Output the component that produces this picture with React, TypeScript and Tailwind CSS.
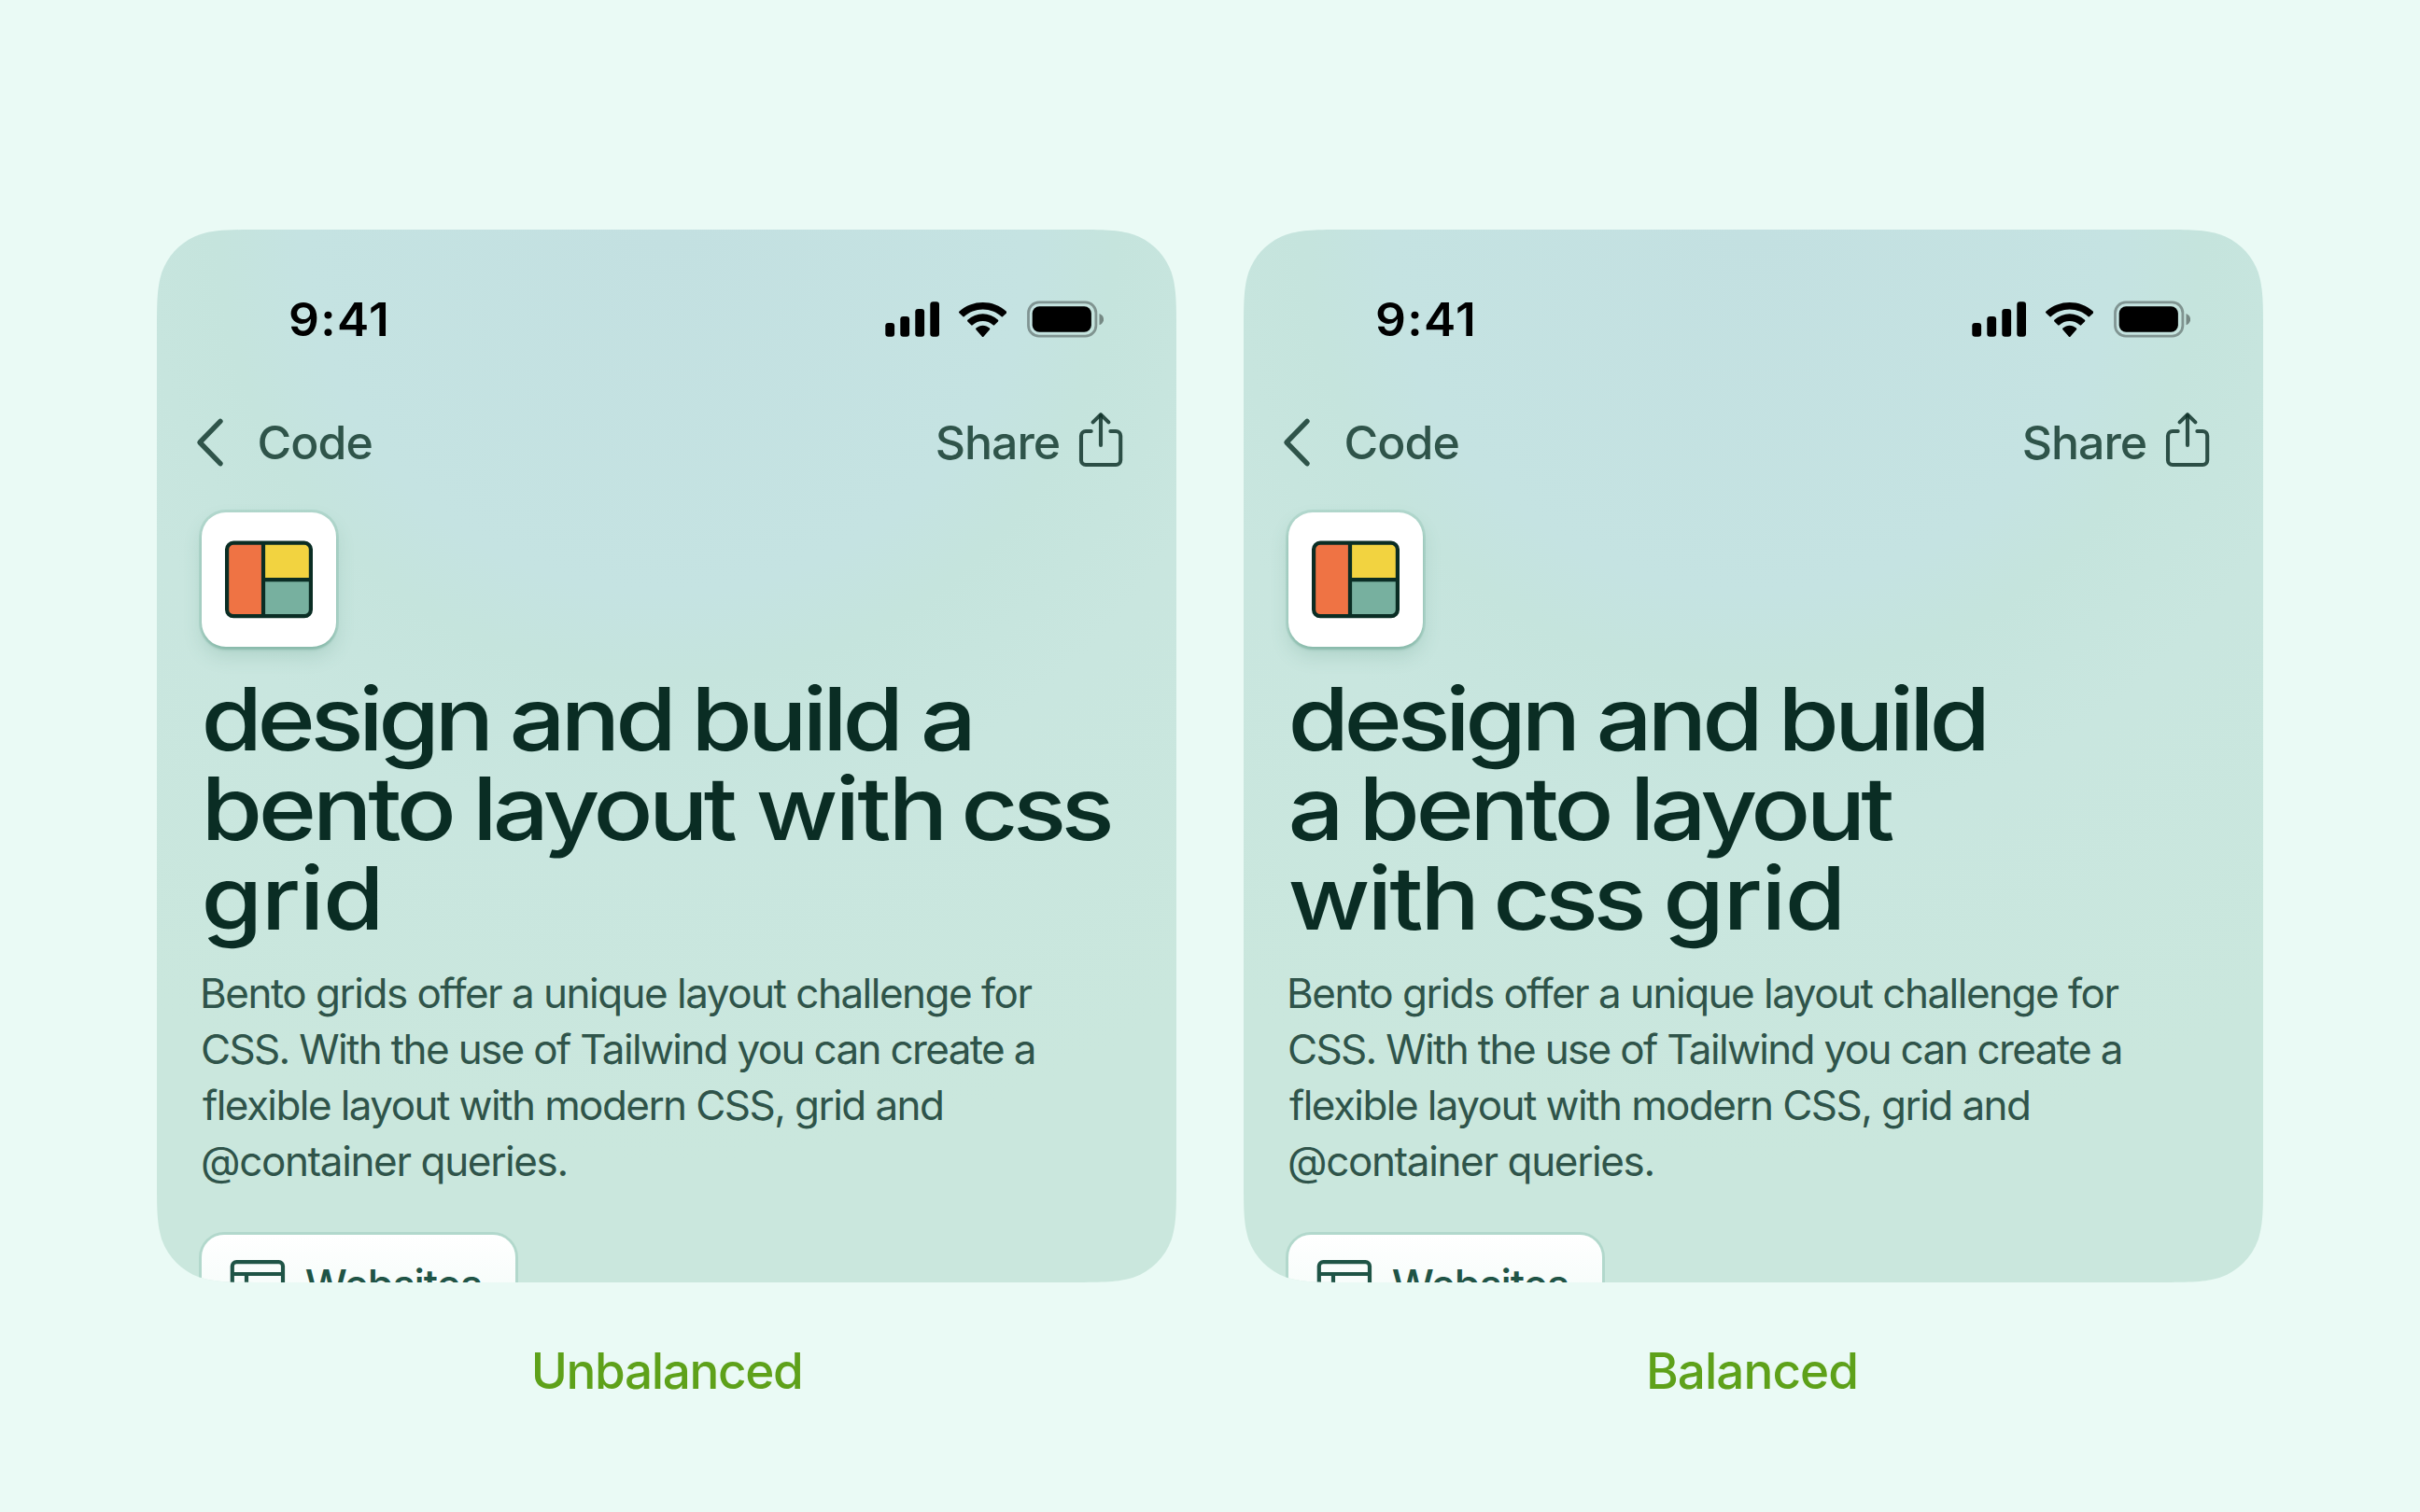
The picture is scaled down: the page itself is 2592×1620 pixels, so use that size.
import type { ReactNode } from "react";

type WordStyle = { tracking: string; gap: string };

// Optical kerning for the display face: letter fit and the space before each word.
const WORDS: Record<string, WordStyle> = {
  design: { tracking: "tracking-[-4.9px]", gap: "ml-[19px]" },
  and: { tracking: "tracking-[-4.6px]", gap: "ml-[19px]" },
  build: { tracking: "tracking-[-4.6px]", gap: "ml-[18.2px]" },
  a: { tracking: "tracking-[0px]", gap: "ml-[20px]" },
  bento: { tracking: "tracking-[-3.9px]", gap: "ml-[13.6px]" },
  layout: { tracking: "tracking-[-4.4px]", gap: "ml-[18.9px]" },
  with: { tracking: "tracking-[-2.7px]", gap: "ml-[21.9px]" },
  css: { tracking: "tracking-[-5px]", gap: "ml-[15px]" },
  grid: { tracking: "tracking-[-1.3px]", gap: "ml-[20.6px]" },
};

function HeadingLine({ text }: { text: string }) {
  return (
    <span className="flex h-24 whitespace-nowrap">
      {text.split(" ").map((word, i) => (
        <span
          key={word}
          className={`${WORDS[word].tracking} ${i === 0 ? "ml-[-0.5px]" : WORDS[word].gap}`}
        >
          {word}
        </span>
      ))}
    </span>
  );
}

function StatusBar() {
  return (
    <div className="flex h-[52px] items-center justify-between pl-[141px] pr-[77.7px] text-black">
      <span className="origin-left scale-x-[1.04] text-[49.5px] font-semibold leading-[52px] tracking-[1.3px]">9:41</span>
      <div className="flex items-center">
        <svg width="58" height="38" viewBox="0 0 58 38" fill="currentColor">
          <rect x="0.3" y="23" width="9.8" height="14.7" rx="3.2" />
          <rect x="16.3" y="16" width="9.8" height="21.7" rx="3.2" />
          <rect x="32.3" y="8" width="9.8" height="29.7" rx="3.2" />
          <rect x="48.3" y="0.3" width="9.7" height="37.4" rx="3.2" />
        </svg>
        <svg className="ml-[21px]" width="51.4" height="37" viewBox="0 0 17.142 12.33" fill="currentColor">
          <path d="M8.5713 2.46628C11.0584 2.46639 13.4504 3.38847 15.2529 5.04195C15.3887 5.1696 15.6056 5.16799 15.7393 5.03834L17.0368 3.77487C17.1045 3.70911 17.1422 3.62004 17.1417 3.52735C17.1411 3.43467 17.1023 3.34603 17.0338 3.28104C12.3028 -1.09368 4.83907 -1.09368 0.108056 3.28104C0.0395 3.34598 0.0006 3.4346 0 3.52728C-0.0006 3.61996 0.037 3.70906 0.104689 3.77487L1.40255 5.03834C1.53615 5.16819 1.75327 5.1698 1.88893 5.04195C3.69167 3.38836 6.08395 2.46628 8.5713 2.46628Z" />
          <path d="M8.56795 6.68656C9.92527 6.68647 11.2341 7.19821 12.2403 8.12234C12.3763 8.25347 12.5907 8.25063 12.7234 8.11594L14.0106 6.79663C14.0784 6.72742 14.116 6.63355 14.1151 6.53599C14.1141 6.43844 14.0746 6.34536 14.0054 6.27757C10.9416 3.38672 6.19688 3.38672 3.13305 6.27757C3.06384 6.34536 3.02435 6.43849 3.02345 6.53607C3.02254 6.63366 3.06028 6.72752 3.12822 6.79663L4.41513 8.11594C4.54778 8.25063 4.76215 8.25347 4.89823 8.12234C5.90368 7.19882 7.21152 6.68713 8.56795 6.68656Z" />
          <path d="M11.0924 9.48011C11.0943 9.58546 11.0572 9.68703 10.9899 9.76084L8.81327 12.2156C8.74946 12.2877 8.66247 12.3283 8.5717 12.3283C8.48093 12.3283 8.39394 12.2877 8.33013 12.2156L6.15314 9.76084C6.08585 9.68697 6.04886 9.58537 6.05085 9.48002C6.05284 9.37467 6.09365 9.27488 6.16364 9.20419C7.55374 7.8836 9.58965 7.8836 10.9798 9.20419C11.0497 9.27493 11.0904 9.37476 11.0924 9.48011Z" />
        </svg>
        <svg className="ml-[21.3px]" width="82.6" height="40" viewBox="0 0 82.6 40">
          <rect x="1.5" y="1.9" width="72.4" height="36.2" rx="11.4" fill="none" stroke="#000" strokeOpacity="0.35" strokeWidth="2.8" />
          <rect x="5.7" y="6.3" width="63.2" height="27.4" rx="7.5" fill="#000" />
          <path d="M77.5 14v12.2c2.9-1.2 4.6-3.5 4.6-6.1s-1.7-4.9-4.6-6.1Z" fill="#000" fillOpacity="0.4" />
        </svg>
      </div>
    </div>
  );
}

function NavBar() {
  return (
    <div className="mt-[76px] flex h-[60px] items-center justify-between pl-9 pr-[50px] text-[50px] font-medium leading-[60px] text-[#2f544a]">
      <div className="flex items-center">
        <svg width="36" height="60" viewBox="0 0 36 60" fill="none" stroke="currentColor" strokeWidth="5.4" strokeLinecap="round" strokeLinejoin="round">
          <path d="M32 7.4 10 30 32 52.7" />
        </svg>
        <span className="ml-[35.5px] tracking-[-0.95px]">Code</span>
      </div>
      <div className="flex items-center">
        <span className="tracking-[-1px]">Share</span>
        <svg className="ml-[14.8px] overflow-visible" width="60" height="60" viewBox="0 0 60 60" fill="none" stroke="#0a2d24" strokeOpacity="0.82" strokeWidth="4.1" strokeLinecap="round" strokeLinejoin="round">
          <path d="M18.7 18H13a5 5 0 0 0-5 5v26a5 5 0 0 0 5 5h32.2a5 5 0 0 0 5-5V23a5 5 0 0 0-5-5h-5.8" />
          <path d="M29 33V1.4" />
          <path d="M20.6 8.4 29 0.1l8.4 8.3" />
        </svg>
      </div>
    </div>
  );
}

function BentoTile() {
  return (
    <div className="ml-12 mt-[45px] flex size-36 shrink-0 items-center justify-center rounded-[26px] bg-white shadow-[0_0_0_3px_rgba(120,180,160,0.25),0_3px_3px_rgba(60,130,105,0.3),0_10px_20px_rgba(60,130,105,0.18)]">
      <svg width="94" height="84" viewBox="0 0 94 84">
        <path d="M9 2h32v80H9a7 7 0 0 1-7-7V9a7 7 0 0 1 7-7Z" fill="#ef7344" />
        <path d="M41 2h44a7 7 0 0 1 7 7v34H41Z" fill="#f2d340" />
        <path d="M41 43h51v32a7 7 0 0 1-7 7H41Z" fill="#77b09f" />
        <g fill="none" stroke="#0a2d24" strokeWidth="4.2">
          <rect x="2.1" y="2.6" width="89.8" height="78.6" rx="7" />
          <path d="M41 2v80M41 42.2h51" />
        </g>
      </svg>
    </div>
  );
}

function WebsitesChip() {
  return (
    <div className="ml-12 mt-[49px] flex h-[108px] w-[336px] shrink-0 items-center rounded-[24px] bg-linear-to-b from-white to-[#effaf6] pl-[30px] text-[#1f5446] shadow-[0_0_0_3px_rgba(120,180,160,0.28)]">
      <svg width="60" height="54" viewBox="0 0 60 54" fill="none" stroke="currentColor" strokeWidth="4.2">
        <rect x="2.8" y="2.1" width="54.2" height="49.8" rx="4.5" />
        <path d="M2.8 15H57M18 15v37" />
      </svg>
      <span className="ml-[20.7px] text-[45px] font-medium leading-[54px] tracking-[-1.14px]">Websites</span>
    </div>
  );
}

function PhoneCard({ lines }: { lines: string[] }) {
  return (
    <div className="flex h-[1128px] w-[1092px] flex-col bg-[radial-gradient(circle_at_50%_0,#c3e0e1_0px,#c5e3e2_390px,#c5e4dd_480px,#c9e6df_640px,#cae7dd_1000px)] pt-[70px] [clip-path:path('M110_0H982C1013.6_0_1029.5_0_1046.5_5.4C1065.2_12.2_1079.8_26.8_1086.6_45.5C1092_62.5_1092_78.4_1092_110V1018C1092_1049.6_1092_1065.5_1086.6_1082.5C1079.8_1101.2_1065.2_1115.8_1046.5_1122.6C1029.5_1128_1013.6_1128_982_1128H110C78.4_1128_62.5_1128_45.5_1122.6C26.8_1115.8_12.2_1101.2_5.4_1082.5C0_1065.5_0_1049.6_0_1018V110C0_78.4_0_62.5_5.4_45.5C12.2_26.8_26.8_12.2_45.5_5.4C62.5_0_78.4_0_110_0Z')]">
      <StatusBar />
      <NavBar />
      <BentoTile />
      <h1 className="ml-12 mt-[29px] w-[880px] origin-left scale-x-[1.13] text-[94px] font-medium leading-[96px] text-[#0a2d24]">
        {lines.map((line) => (
          <HeadingLine key={line} text={line} />
        ))}
      </h1>
      <p className="ml-12 mt-6 flex flex-col whitespace-nowrap text-[44px] leading-[60px] text-[#2f544a]">
        <span className="ml-[-2px] tracking-[-1.51px]">Bento grids offer a unique layout challenge for</span>
        <span className="ml-[-1px] tracking-[-1.66px]">CSS. With the use of Tailwind you can create a</span>
        <span className="ml-px tracking-[-1.57px]">flexible layout with modern CSS, grid and</span>
        <span className="ml-[-1px] tracking-[-1.36px]">@container queries.</span>
      </p>
      <WebsitesChip />
    </div>
  );
}

function Caption({ children }: { children: ReactNode }) {
  return (
    <figcaption className="mt-[65px] text-center text-[53px] font-medium leading-[60px] text-[#5ea11a]">{children}</figcaption>
  );
}

export default function App() {
  return (
    <main className="flex h-[1620px] w-[2592px] items-start gap-[72px] overflow-hidden bg-[#eafaf5] px-[168px] pt-[246px] font-['Inter',sans-serif]">
      <figure className="shrink-0">
        <PhoneCard lines={["design and build a", "bento layout with css", "grid"]} />
        <Caption>
          <span className="tracking-[-1.36px]">Unbalanced</span>
        </Caption>
      </figure>
      <figure className="shrink-0">
        <PhoneCard lines={["design and build", "a bento layout", "with css grid"]} />
        <Caption>
          <span className="mr-[3px] tracking-[-0.96px]">Balanced</span>
        </Caption>
      </figure>
    </main>
  );
}
